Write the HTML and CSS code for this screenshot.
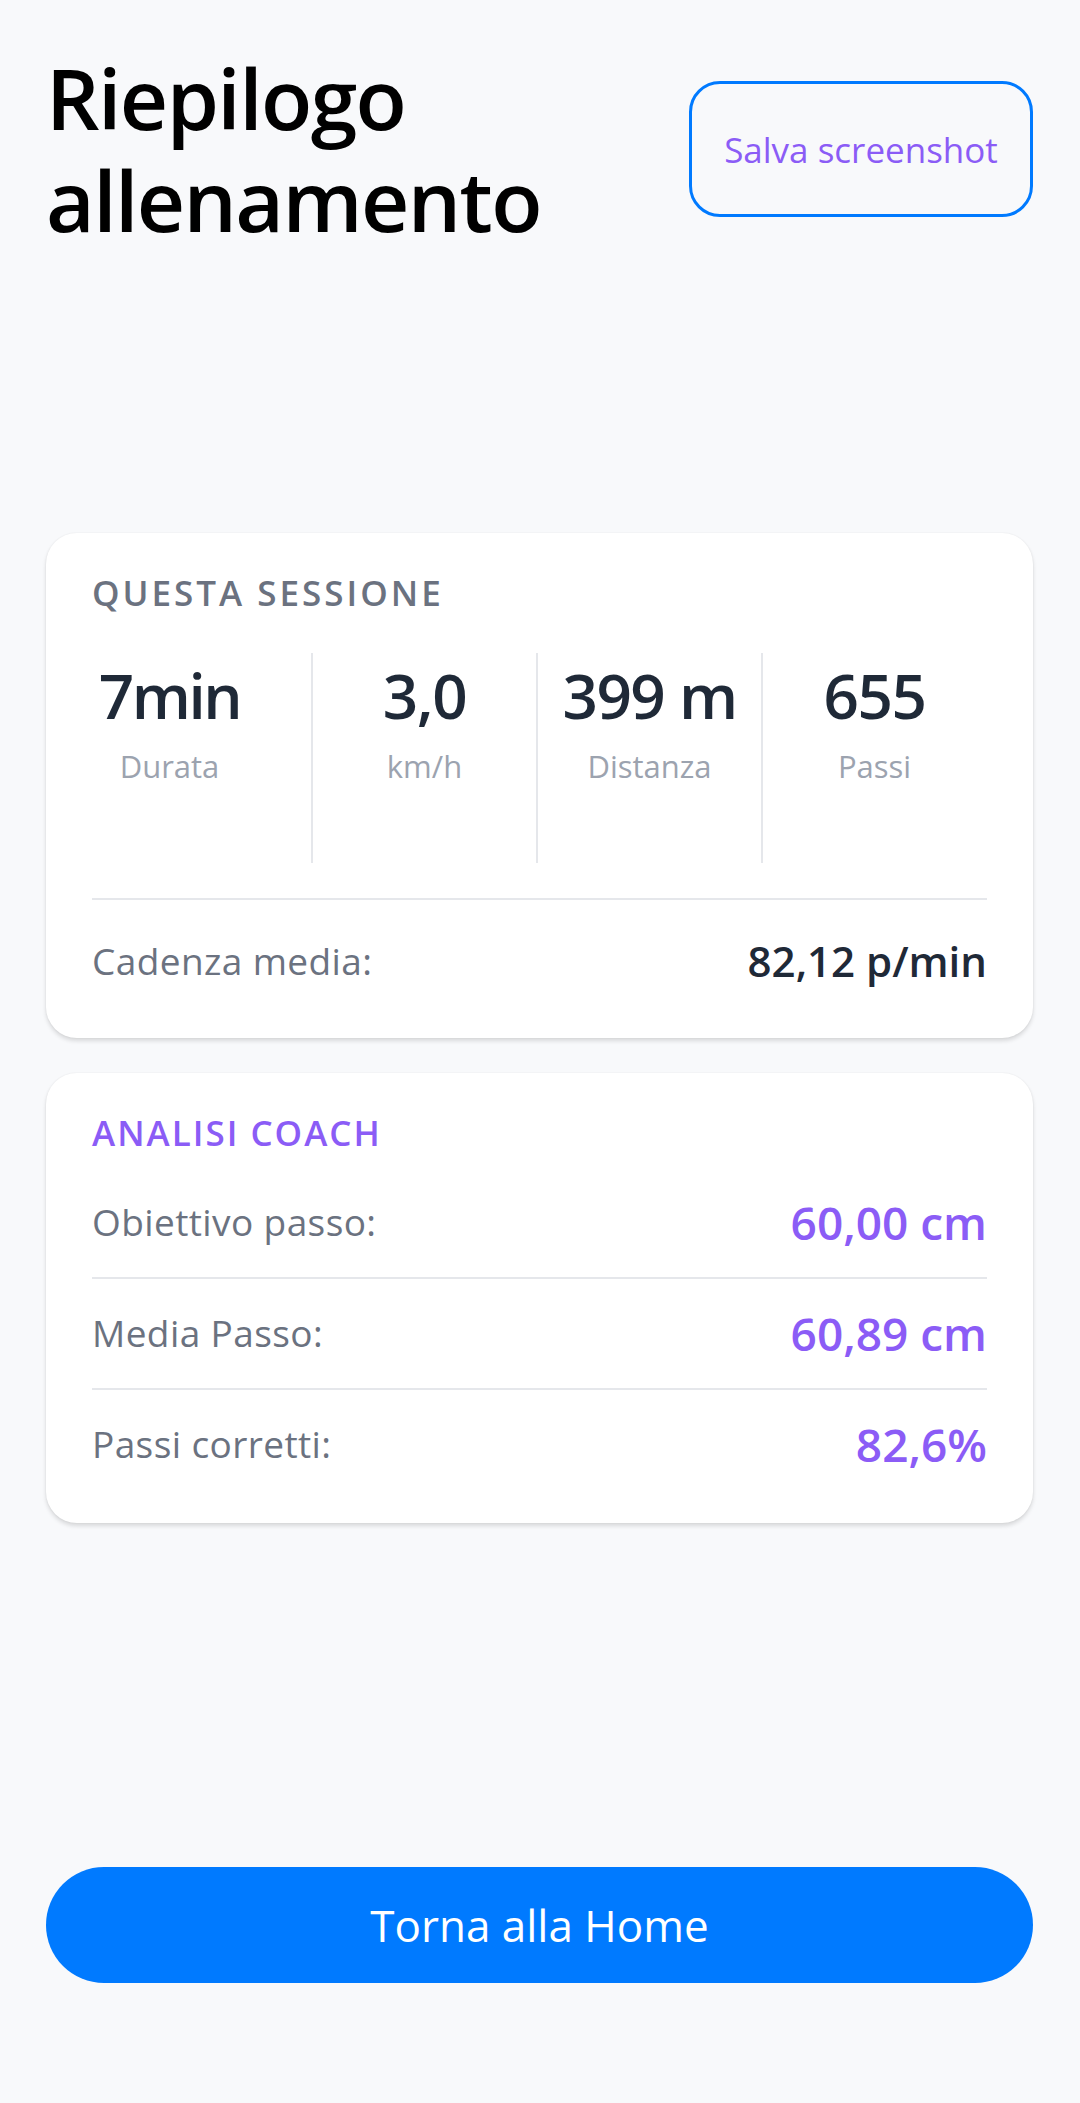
FILE: index.html
```html
<!DOCTYPE html>
<html lang="it">
<head>
<meta charset="utf-8">
<title>Riepilogo allenamento</title>
<link rel="stylesheet" href="styles.css">
</head>
<body>
<div class="page">
  <header class="header">
    <h1 class="title">Riepilogo<br>allenamento</h1>
    <button class="btn-outline">Salva screenshot</button>
  </header>

  <section class="card card--session">
    <h2 class="card-title">QUESTA SESSIONE</h2>
    <div class="stats">
      <div class="stat stat--first">
        <div class="stat-value">7min</div>
        <div class="stat-label">Durata</div>
      </div>
      <div class="stat">
        <div class="stat-value">3,0</div>
        <div class="stat-label">km/h</div>
      </div>
      <div class="stat">
        <div class="stat-value">399 m</div>
        <div class="stat-label">Distanza</div>
      </div>
      <div class="stat stat--last">
        <div class="stat-value">655</div>
        <div class="stat-label">Passi</div>
      </div>
    </div>
    <div class="summary-row">
      <span class="row-label">Cadenza media:</span>
      <span class="row-value">82,12 p/min</span>
    </div>
  </section>

  <section class="card card--coach">
    <h2 class="card-title card-title--coach">ANALISI COACH</h2>
    <div class="coach-row">
      <span class="row-label">Obiettivo passo:</span>
      <span class="coach-value">60,00 cm</span>
    </div>
    <div class="coach-row">
      <span class="row-label">Media Passo:</span>
      <span class="coach-value">60,89 cm</span>
    </div>
    <div class="coach-row coach-row--last">
      <span class="row-label">Passi corretti:</span>
      <span class="coach-value">82,6%</span>
    </div>
  </section>

  <footer class="footer">
    <button class="btn-primary">Torna alla Home</button>
  </footer>
</div>
</body>
</html>
```

FILE: styles.css
```css
* { box-sizing: border-box; }

html, body {
  margin: 0;
  padding: 0;
  background: #F8F9FB;
}

body {
  font-family: "Open Sans", "Noto Sans", sans-serif;
  color: #1F2937;
}

.page {
  min-height: 100vh;
  display: flex;
  flex-direction: column;
  padding: 47px 47px 120px 46px;
}

.header {
  display: flex;
  justify-content: space-between;
  align-items: flex-start;
}

.title {
  margin: 0;
  font-size: 84px;
  line-height: 102px;
  font-weight: 600;
  color: #000;
  letter-spacing: -1.6px;
}

.btn-outline {
  margin-top: 34px;
  width: 344px;
  height: 136px;
  border: 3px solid #007AFF;
  border-radius: 31px;
  background: transparent;
  color: #8B5CF6;
  font-family: inherit;
  font-size: 35px;
  font-weight: 400;
  display: flex;
  align-items: center;
  justify-content: center;
  padding: 0;
}

.card {
  background: #fff;
  border-radius: 31px;
  box-shadow: 0 3px 4px rgba(0, 0, 0, 0.13), 0 0 2px rgba(0, 0, 0, 0.07);
  padding: 38px 46px 48px 46px;
}

.card--session {
  margin-top: 282px;
}

.card--coach {
  margin-top: 35px;
  padding-bottom: 24px;
}

.card-title {
  margin: 0;
  font-size: 35px;
  line-height: 44px;
  font-weight: 600;
  letter-spacing: 3px;
  color: #6B7280;
}

.card-title--coach {
  color: #8B5CF6;
  letter-spacing: 2px;
  margin-bottom: 13px;
}

.stats {
  margin-top: 38px;
  display: grid;
  grid-template-columns: 221px 225px 225px 223px;
}

.stat {
  display: flex;
  flex-direction: column;
  align-items: center;
  padding-bottom: 75px;
  border-right: 2px solid #E5E7EB;
}

.stat--first {
  padding-right: 64px;
}

.stat--last {
  border-right: none;
}

.stat-value {
  font-size: 62px;
  line-height: 85px;
  font-weight: 600;
  color: #1F2937;
  letter-spacing: -1.5px;
}

.stat--first .stat-value {
  letter-spacing: -2.5px;
}

.stat-label {
  margin-top: 6px;
  font-size: 31px;
  line-height: 44px;
  color: #9CA3AF;
}

.summary-row {
  margin-top: 35px;
  border-top: 2px solid #E5E7EB;
  padding-top: 32px;
  display: flex;
  justify-content: space-between;
  align-items: center;
  line-height: 58px;
}

.row-label {
  font-size: 37px;
  letter-spacing: 0.4px;
  color: #6B7280;
}

.row-value {
  font-size: 42px;
  font-weight: 600;
  color: #1F2937;
}

.coach-row {
  display: flex;
  justify-content: space-between;
  align-items: center;
  line-height: 58px;
  padding: 25px 0 26px;
  border-bottom: 2px solid #E5E7EB;
}

.coach-row--last {
  border-bottom: none;
}

.coach-value {
  font-size: 46px;
  font-weight: 600;
  color: #8B5CF6;
}

.footer {
  margin-top: auto;
}

.btn-primary {
  display: block;
  width: 100%;
  height: 116px;
  border: none;
  border-radius: 58px;
  background: #007AFF;
  color: #fff;
  font-family: inherit;
  font-size: 44px;
  font-weight: 400;
  padding: 0;
}
```
